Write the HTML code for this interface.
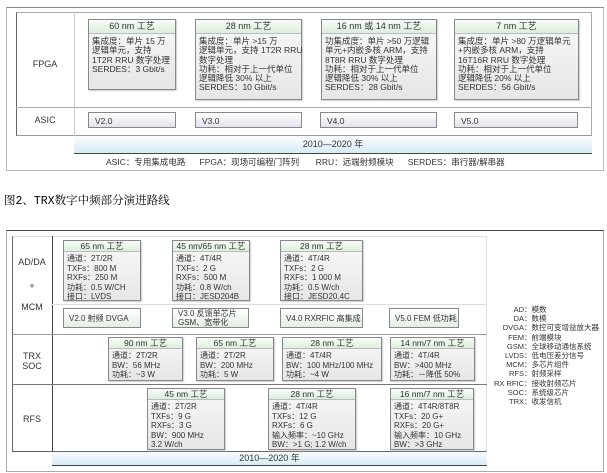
<!DOCTYPE html>
<html><head><meta charset="utf-8"><style>
*{margin:0;padding:0;box-sizing:border-box}
body{width:607px;height:473px;background:#fff;position:relative;overflow:hidden;font-family:"Liberation Sans","Noto Sans CJK SC",sans-serif;font-size:8.5px;color:#333;line-height:9px}
.a{position:absolute}
.box{position:absolute;border:1px solid #888;background:linear-gradient(#f8f8f8,#e6e6e6);box-shadow:1px 1px 1px #ccc}
.box .h{height:14px;border-bottom:1px solid #bbb;background:linear-gradient(#f8fcf8,#dceedd);text-align:center;line-height:13px;font-size:9px}
.box .b{padding:3px 0 0 3px;white-space:nowrap;line-height:9.3px}
.bb .h{height:11px;line-height:10px;font-size:8.5px}
.bb .b{padding:2px 0 0 3px;line-height:9.5px;font-size:8px}
.v{position:absolute;border:1px solid #888;background:linear-gradient(#fff,#e4e2ee);padding:2px 0 0 6px;line-height:12px}
.vg{position:absolute;border:1px solid #888;background:linear-gradient(#fff,#e4efe4);padding:0 0 0 5px;display:flex;align-items:center;line-height:9px;white-space:nowrap;font-size:8px;overflow:hidden}
.lbl{position:absolute;text-align:center;font-size:9px}
.yr{position:absolute;background:linear-gradient(#f8fcff,#d8ecf6);border-bottom:1.5px solid #444;text-align:center;font-size:9px}
.leg{position:absolute;left:488px;width:120px;white-space:nowrap;font-size:7.5px}
.leg div{height:9.2px;line-height:9.2px}
.leg span{display:inline-block;width:36px;text-align:right}
</style></head><body>
<!-- top figure -->
<div class="a" style="left:6px;top:7px;width:598px;height:164px;border:1px solid #bbb;border-top:1px solid #888"></div>
<div class="a" style="left:16px;top:12px;width:576px;height:124px;border:1px solid #aaa;border-left:1px solid #666;border-bottom:1px solid #999"></div>
<div class="a" style="left:74px;top:12px;width:1px;height:124px;background:#ccc"></div>
<div class="a" style="left:16px;top:107px;width:576px;height:1px;background:#aaa"></div>
<div class="lbl" style="left:16px;top:60px;width:58px">FPGA</div>
<div class="lbl" style="left:16px;top:116px;width:58px">ASIC</div>
<div class="box" style="left:88px;top:19px;width:88px;height:71px"><div class="h">60 nm 工艺</div><div class="b">集成度：单片 15 万<br>逻辑单元，支持<br>1T2R RRU 数字处理<br>SERDES：3 Gbit/s</div></div>
<div class="box" style="left:195px;top:19px;width:107px;height:81px"><div class="h">28 nm 工艺</div><div class="b">集成度：单片 &gt;15 万<br>逻辑单元，支持 1T2R RRU<br>数字处理<br>功耗：相对于上一代单位<br>逻辑降低 30% 以上<br>SERDES：10 Gbit/s</div></div>
<div class="box" style="left:321px;top:19px;width:116px;height:81px"><div class="h">16 nm 或 14 nm 工艺</div><div class="b">功集成度：单片 &gt;50 万逻辑<br>单元+内嵌多核 ARM，支持<br>8T8R RRU 数字处理<br>功耗：相对于上一代单位<br>逻辑降低 30% 以上<br>SERDES：28 Gbit/s</div></div>
<div class="box" style="left:454px;top:19px;width:125px;height:81px"><div class="h">7 nm 工艺</div><div class="b">集成度：单片 &gt;80 万逻辑单元<br>+内嵌多核 ARM，支持<br>16T16R RRU 数字处理<br>功耗：相对于上一代单位<br>逻辑降低 20% 以上<br>SERDES：56 Gbit/s</div></div>
<div class="v" style="left:88px;top:112px;width:88px;height:16px">V2.0</div>
<div class="v" style="left:195px;top:112px;width:107px;height:16px">V3.0</div>
<div class="v" style="left:320px;top:112px;width:117px;height:16px">V4.0</div>
<div class="v" style="left:454px;top:112px;width:124px;height:16px">V5.0</div>
<div class="yr" style="left:74px;top:136px;width:518px;height:18px;line-height:17px">2010—2020 年</div>
<div class="a" style="left:106px;top:158px;white-space:nowrap;font-size:8.5px">ASIC：专用集成电路&nbsp;&nbsp;&nbsp;&nbsp;&nbsp;&nbsp;FPGA：现场可编程门阵列&nbsp;&nbsp;&nbsp;&nbsp;&nbsp;&nbsp;&nbsp;RRU：远端射频模块&nbsp;&nbsp;&nbsp;&nbsp;&nbsp;&nbsp;SERDES：串行器/解串器</div>
<div class="a" style="left:4px;top:195px;font-family:'Liberation Mono','Noto Serif CJK SC',serif;font-size:11.5px;color:#000;line-height:14px;white-space:nowrap">图2、TRX数字中频部分演进路线</div>
<!-- bottom figure -->
<div class="a" style="left:6px;top:230px;width:598px;height:242px;border:1px solid #aaa;border-top:1.5px solid #444"></div>
<div class="a" style="left:12px;top:236px;width:475px;height:216px;border:1px solid #ddd;border-left:1px solid #666;border-bottom:1px solid #666"></div>
<div class="a" style="left:52px;top:236px;width:1px;height:230px;background:#444"></div>
<div class="a" style="left:52px;top:304px;width:435px;height:1px;background:#ddd"></div>
<div class="a" style="left:12px;top:334px;width:475px;height:1px;background:#999"></div>
<div class="a" style="left:12px;top:384px;width:475px;height:1px;background:#777"></div>
<div class="lbl" style="left:12px;top:258px;width:40px">AD/DA</div>
<div class="lbl" style="left:12px;top:282px;width:40px">+</div>
<div class="lbl" style="left:12px;top:303px;width:40px">MCM</div>
<div class="lbl" style="left:12px;top:352px;width:40px;line-height:9.5px">TRX<br>SOC</div>
<div class="lbl" style="left:12px;top:415px;width:40px">RFS</div>
<div class="box bb" style="left:63px;top:240px;width:78px;height:61px"><div class="h">65 nm 工艺</div><div class="b">通道：2T/2R<br>TXFs：800 M<br>RXFs：250 M<br>功耗：0.5 W/CH<br>接口：LVDS</div></div>
<div class="box bb" style="left:172px;top:240px;width:78px;height:61px"><div class="h">45 nm/65 nm 工艺</div><div class="b">通道：4T/4R<br>TXFs：2 G<br>RXFs：500 M<br>功耗：0.8 W/ch<br>接口：JESD204B</div></div>
<div class="box bb" style="left:280px;top:240px;width:83px;height:61px"><div class="h">28 nm 工艺</div><div class="b">通道：4T/4R<br>TXFs：2 G<br>RXFs：1 000 M<br>功耗：0.5 W/ch<br>接口：JESD20.4C</div></div>
<div class="vg" style="left:63px;top:308px;width:78px;height:20px">V2.0 射频 DVGA</div>
<div class="vg" style="left:172px;top:308px;width:77px;height:20px">V3.0 反馈单芯片<br>GSM、宽带化</div>
<div class="vg" style="left:280px;top:308px;width:83px;height:20px">V4.0 RXRFIC 高集成</div>
<div class="vg" style="left:389px;top:308px;width:70px;height:20px">V5.0 FEM 低功耗</div>
<div class="box bb" style="left:108px;top:337px;width:75px;height:44px"><div class="h">90 nm 工艺</div><div class="b">通道：2T/2R<br>BW：56 MHz<br>功耗：~3 W</div></div>
<div class="box bb" style="left:196px;top:337px;width:78px;height:44px"><div class="h">65 nm 工艺</div><div class="b">通道：2T/2R<br>BW：200 MHz<br>功耗：5 W</div></div>
<div class="box bb" style="left:282px;top:337px;width:100px;height:44px"><div class="h">28 nm 工艺</div><div class="b">通道：4T/4R<br>BW：100 MHz/100 MHz<br>功耗：~4 W</div></div>
<div class="box bb" style="left:390px;top:337px;width:85px;height:44px"><div class="h">14 nm/7 nm 工艺</div><div class="b">通道：4T/4R<br>BW：&gt;400 MHz<br>功耗：－降低 50%</div></div>
<div class="box bb" style="left:147px;top:388px;width:78px;height:62px"><div class="h">45 nm 工艺</div><div class="b">通道：2T/2R<br>TXFs：9 G<br>RXFs：3 G<br>BW：900 MHz<br>3.2 W/ch</div></div>
<div class="box bb" style="left:268px;top:388px;width:88px;height:62px"><div class="h">28 nm 工艺</div><div class="b">通道：4T/4R<br>TXFs：12 G<br>RXFs：6 G<br>输入频率：~10 GHz<br>BW：&gt;1 G; 1.2 W/ch</div></div>
<div class="box bb" style="left:390px;top:388px;width:84px;height:62px"><div class="h">16 nm/7 nm 工艺</div><div class="b">通道：4T4R/8T8R<br>TXFs：20 G+<br>RXFs：20 G+<br>输入频率：10 GHz<br>BW：&gt;3 GHz</div></div>
<div class="yr" style="left:52px;top:452px;width:435px;height:14px;line-height:13px">2010—2020 年</div>
<div class="leg" style="top:305px">
<div><span>AD</span>：模数</div><div><span>DA</span>：数模</div><div><span>DVGA</span>：数控可变增益放大器</div><div><span>FEM</span>：前端模块</div><div><span>GSM</span>：全球移动通信系统</div><div><span>LVDS</span>：低电压差分信号</div><div><span>MCM</span>：多芯片组件</div><div><span>RFS</span>：射频采样</div><div><span>RX RFIC</span>：接收射频芯片</div><div><span>SOC</span>：系统级芯片</div><div><span>TRX</span>：收发信机</div>
</div>
</body></html>
